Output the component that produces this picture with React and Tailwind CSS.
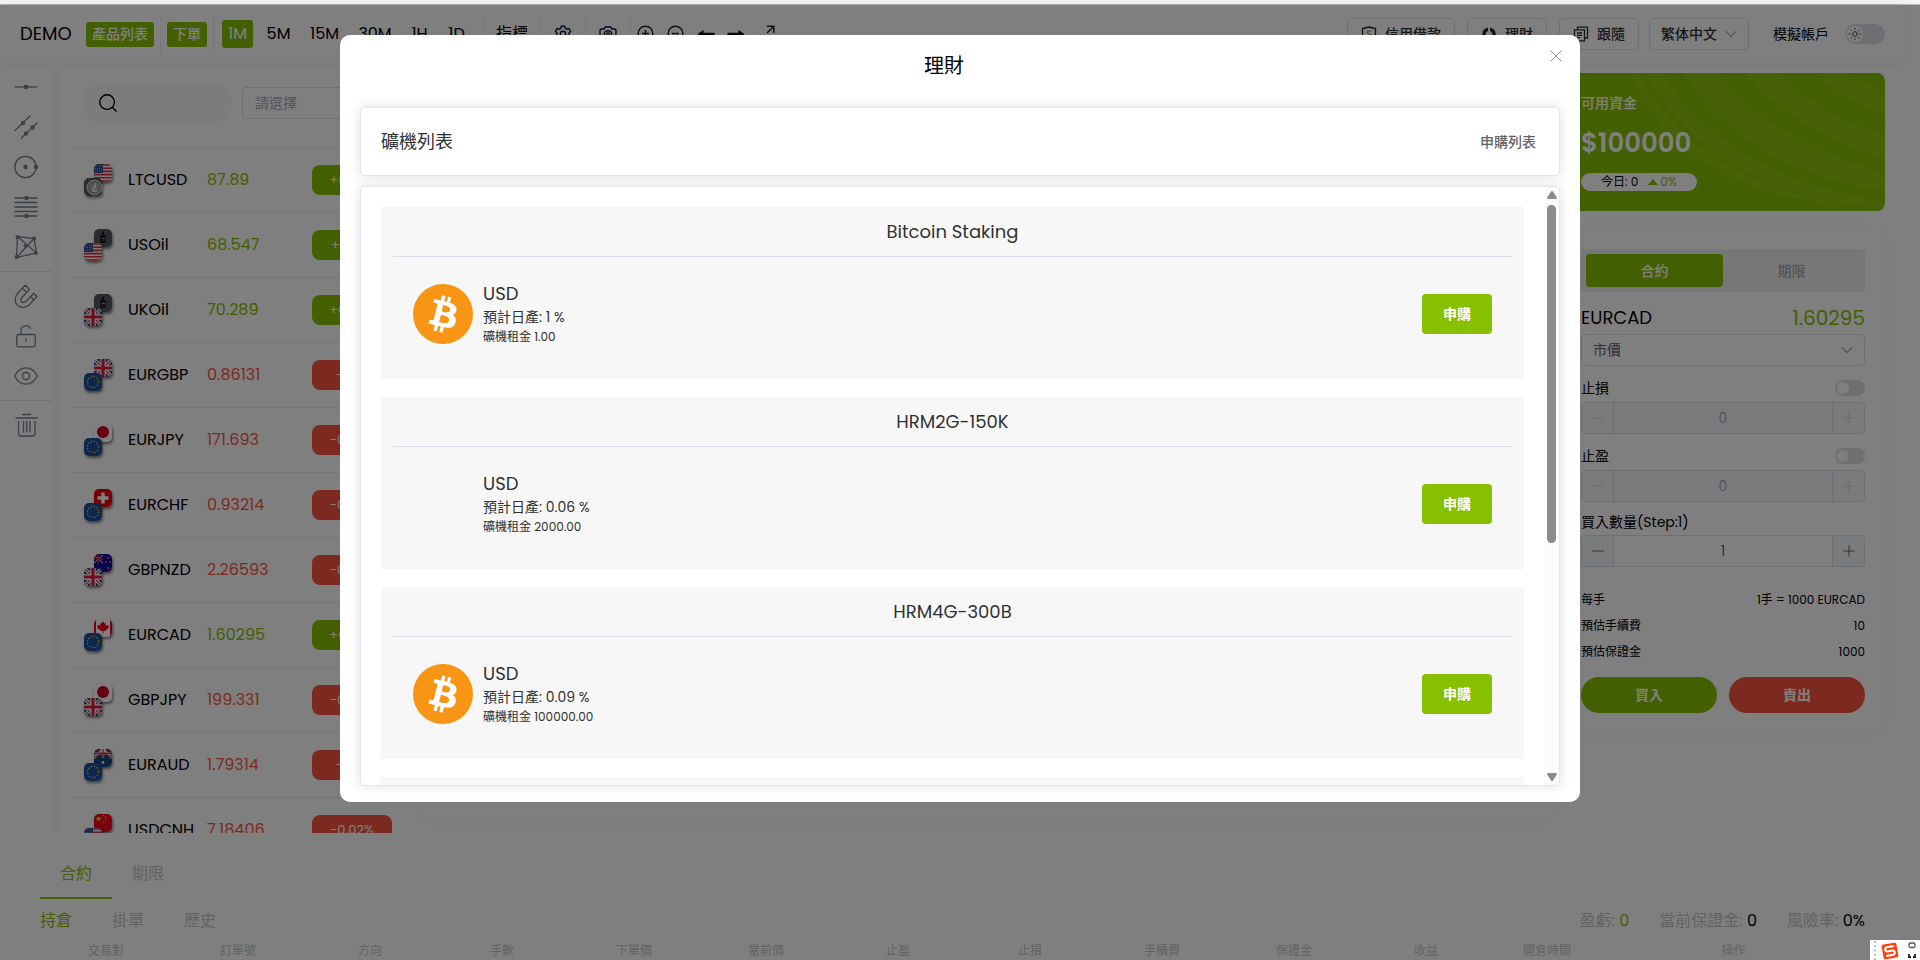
import React from "react";
import { Search, ChevronDown, X, Plus, Minus, Sun } from "lucide-react";

const FONT =
  "font-[Poppins,Inter,'Noto_Sans_CJK_TC',sans-serif]";

/* ---------- flags ---------- */

function UnionJack() {
  return (
    <>
      <rect width="18" height="18" fill="#22408c" />
      <path d="M0 0L18 18M18 0L0 18" stroke="#fff" strokeWidth="3.6" />
      <path d="M0 0L18 18M18 0L0 18" stroke="#d8203a" strokeWidth="1.2" />
      <path d="M9 0V18M0 9H18" stroke="#fff" strokeWidth="5.4" />
      <path d="M9 0V18M0 9H18" stroke="#d8203a" strokeWidth="3.2" />
    </>
  );
}

const FLAG_ART = {
  us: (
    <>
      <rect width="18" height="18" fill="#f4f4f4" />
      <path
        d="M0 1H18M0 4.2H18M0 7.4H18M0 10.6H18M0 13.8H18M0 17H18"
        stroke="#d22f45"
        strokeWidth="1.6"
      />
      <rect width="9" height="9" fill="#35508f" />
      <path d="M1 2H8M1 4.5H8M1 7H8" stroke="#9fb0d8" strokeWidth="0.8" strokeDasharray="1 1" />
    </>
  ),
  ltc: (
    <>
      <rect width="18" height="18" fill="#4c4c4c" />
      <path d="M2 0V18M5 0V6" stroke="#777" strokeWidth="1" />
      <circle cx="10.5" cy="9.5" r="7.5" fill="#a9a9a9" stroke="#dadada" />
      <circle cx="10.5" cy="9.5" r="5.4" fill="none" stroke="#7c7c7c" strokeWidth="0.6" />
      <path d="M11.6 5L9.2 13H13.4M8 10.4L12.4 8.4" stroke="#eee" strokeWidth="1.4" fill="none" />
    </>
  ),
  oil: (
    <>
      <rect width="18" height="18" fill="#55595f" />
      <path d="M6 7L9 4L12 7V14H6Z" fill="#222" />
      <path d="M9 2.5V8" stroke="#151515" strokeWidth="2" />
      <path d="M8 9.5H11" stroke="#bbb" strokeWidth="0.8" />
    </>
  ),
  gb: <UnionJack />,
  eu: (
    <>
      <rect width="18" height="18" fill="#1b4f9e" />
      <circle
        cx="9"
        cy="9"
        r="5.6"
        fill="none"
        stroke="#f1d53a"
        strokeWidth="1.3"
        strokeDasharray="1.2 1.73"
      />
    </>
  ),
  jp: (
    <>
      <rect width="18" height="18" fill="#fff" />
      <circle cx="9" cy="8" r="6" fill="#cc0029" />
    </>
  ),
  ch: (
    <>
      <rect width="18" height="18" fill="#ee0010" />
      <path d="M9 3.5V14.5M3.5 9H14.5" stroke="#fff" strokeWidth="3.4" />
    </>
  ),
  nz: (
    <>
      <rect width="18" height="18" fill="#0a0a9a" />
      <path d="M0 1L9 9M9 1L0 9" stroke="#eee" strokeWidth="1" />
      <path d="M4.5 0V10M0 5H9" stroke="#e2243b" strokeWidth="1.6" />
      <circle cx="14.5" cy="4" r="1" fill="#e8506a" />
      <circle cx="12" cy="8" r="1" fill="#e8506a" />
      <circle cx="16" cy="8" r="1" fill="#e8506a" />
      <circle cx="14.5" cy="14" r="1.1" fill="#e8506a" />
    </>
  ),
  ca: (
    <>
      <rect width="18" height="18" fill="#fff" />
      <path d="M0 0H2V18H0ZM16 0H18V18H16Z" fill="#f00018" />
      <path
        d="M9 2L10.4 4.6L12 4L11.6 7L13.4 5.8L15 7.6L14 9.4L10.8 12H9.5V14.2H8.5V12H7.2L4 9.4L3 7.6L4.6 5.8L6.4 7L6 4L7.6 4.6Z"
        fill="#f00018"
      />
    </>
  ),
  au: (
    <>
      <rect width="18" height="18" fill="#10467e" />
      <path d="M0 9L9 0L18 9" stroke="#fff" strokeWidth="2.6" fill="none" />
      <path d="M0 0L9 5L18 0M0 9L9 3L18 9" stroke="#e02a3c" strokeWidth="1.2" fill="none" />
      <path d="M9 0V9M0 4.5H18" stroke="#fff" strokeWidth="2.2" />
      <path d="M9 0V9M0 4.5H18" stroke="#e02a3c" strokeWidth="1.3" />
      <circle cx="9" cy="13.5" r="1.4" fill="#dfe8f4" />
    </>
  ),
  cn: (
    <>
      <rect width="18" height="18" fill="#f0051a" />
      <path
        d="M4.6 2L5.4 4H7.6L5.9 5.3L6.6 7.4L4.6 6.1L2.6 7.4L3.3 5.3L1.6 4H3.8Z"
        fill="#ffe100"
      />
      <path d="M9 1.4H10M11 3.4H12M11 6H12M9 8H10" stroke="#ffe100" />
    </>
  ),
};

function Flag({ code, className }) {
  return (
    <svg
      viewBox="0 0 18 18"
      aria-hidden="true"
      className={`absolute size-[18px] rounded-[5px] shadow-[1px_2px_3px_rgba(0,0,0,0.5)] ${className}`}
    >
      {FLAG_ART[code]}
    </svg>
  );
}

/* ---------- header icons ---------- */

const GearIcon = () => (
  <svg viewBox="0 0 18 18" className="size-[18px]" fill="none" stroke="#101a3c" strokeWidth="1.4">
    <path d="M7.3 1.2h3.4l.6 2.1 1.5.9 2.2-.6 1.6 2.9-1.6 1.6v1.8l1.6 1.6-1.6 2.9-2.2-.6-1.5.9-.6 2.1H7.3l-.6-2.1-1.5-.9-2.2.6-1.6-2.9L3 9.9V8.1L1.4 6.5 3 3.6l2.2.6 1.5-.9z" />
    <circle cx="9" cy="9" r="2.7" />
  </svg>
);

const CameraIcon = () => (
  <svg viewBox="0 0 18 18" className="size-[18px]" fill="none" stroke="#101a3c" strokeWidth="1.4">
    <path d="M1 5.5a1.5 1.5 0 0 1 1.5-1.5H5l1.2-2h5.6L13 4h2.500A1.500 1.500 0 0 1 17 5.500V14a1.500 1.500 0 0 1-1.500 1.500h-13A1.500 1.500 0 0 1 1 14z" />
    <circle cx="9" cy="9.5" r="3.8" />
    <circle cx="9" cy="9.5" r="1.5" />
  </svg>
);

const ZoomIcon = ({ plus }) => (
  <svg viewBox="0 0 18 18" className="size-[18px]" fill="none" stroke="#222" strokeWidth="1.5">
    <circle cx="8.5" cy="8.5" r="7.3" />
    <path d={plus ? "M5 8.5h7M8.5 5v7M13.5 13.5L17 17" : "M5 8.5h7M13.5 13.5L17 17"} />
  </svg>
);

const ArrowIcon = ({ right }) => (
  <svg viewBox="0 0 18 18" className={right ? "size-[18px] rotate-180" : "size-[18px]"}>
    <path d="M0.5 9L6.5 5V7.7H17.5V10.3H6.5V13Z" fill="#111" />
  </svg>
);

const ExpandIcon = () => (
  <svg viewBox="0 0 18 18" className="size-[18px]" fill="none" stroke="#222" strokeWidth="1.5">
    <path d="M10 8L16.5 1.5M10 1.2H16.8V8M8 10L1.5 16.5M1.2 10V16.8H8" />
  </svg>
);

const CoinIcon = () => (
  <svg viewBox="0 0 16 16" className="size-4">
    <path d="M7 1.5A7 7 0 0 0 1.2 9L5 9.8A3.5 3.5 0 0 1 7 5Z" fill="#1c2230" />
    <path d="M9 1.5A7 7 0 0 1 14.8 9L11 9.8A3.5 3.5 0 0 0 9 5Z" fill="#1c2230" />
    <path d="M2 11L5.3 11.3A3.6 3.6 0 0 0 10.7 11.3L14 11A7 7 0 0 1 2 11Z" fill="#1c2230" />
  </svg>
);

const LoanIcon = () => (
  <svg viewBox="0 0 16 16" className="size-4" fill="none" strokeWidth="1.3">
    <path d="M8 1L14.5 2.5V8C14.5 12 11.5 14 8 15.3C4.5 14 1.5 12 1.5 8V2.5Z" stroke="#222" />
    <path d="M10 5.8C9.6 4.8 6.3 4.7 6.3 6.5C6.3 8.2 10 7.5 10 9.4C10 11.2 6.4 11 6 9.9" stroke="#87c000" />
  </svg>
);

const FollowIcon = () => (
  <svg viewBox="0 0 16 16" className="size-4" fill="none" stroke="#303133" strokeWidth="1.3">
    <path d="M4.5 3.5V1.2H14.5V12H12M1.5 3.8H11.5V14.8H1.5ZM4 7H9M4 9.3H9M4 11.6H7" />
  </svg>
);

/* ---------- drawing tool icons ---------- */

function Tool({ label, children }) {
  return (
    <button type="button" aria-label={label} className="flex h-10 w-full items-center justify-center">
      <svg viewBox="0 0 24 24" className="size-6" fill="none" stroke="#76808f" strokeWidth="1.3">
        {children}
      </svg>
    </button>
  );
}

function Sidebar() {
  const dot = { fill: "#76808f", stroke: "none" };
  return (
    <aside className="w-[52px] shrink-0 pt-1">
      <Tool label="水平線">
        <path d="M0.5 12H23.5" />
        <circle cx="12" cy="12" r="2.3" {...dot} />
      </Tool>
      <Tool label="平行線">
        <path d="M0.5 16L16.5 0.5M7 23.5L23.5 7.5" />
        <circle cx="9" cy="8" r="2.2" {...dot} />
        <circle cx="18.5" cy="12.5" r="2.2" {...dot} />
        <circle cx="12" cy="18.5" r="2.2" {...dot} />
      </Tool>
      <Tool label="圓">
        <circle cx="11.5" cy="12" r="10.6" />
        <circle cx="11.5" cy="12" r="2.2" {...dot} />
        <circle cx="22" cy="12" r="2.2" {...dot} />
      </Tool>
      <Tool label="斐波那契">
        <path d="M0.5 3H23.5M0.5 7.5H23.5M0.5 12H23.5M0.5 16.5H23.5M0.5 21H23.5" />
        <circle cx="12.5" cy="3" r="2.2" {...dot} />
        <circle cx="12.5" cy="21" r="2.2" {...dot} />
      </Tool>
      <Tool label="XABCD">
        <path d="M3.5 1.5L20 3.5L22.5 18L2.5 22.5ZM3.5 1.5L22.5 18M20 3.5L2.5 22.5" />
        <circle cx="3.5" cy="2" r="2" {...dot} />
        <circle cx="20" cy="3.5" r="2" {...dot} />
        <circle cx="22" cy="18" r="2" {...dot} />
        <circle cx="2.5" cy="22" r="2" {...dot} />
        <circle cx="11.5" cy="11" r="2" {...dot} />
      </Tool>
      <hr className="my-1 border-[#e3e6ea]" />
      <Tool label="磁鐵">
        <path d="M11.5 1L3.5 9.5C-0.5 14.5 1 20 4.5 22C8.5 24.5 13 23 16 20L23 12.5L19.5 9.5L12.5 17C11 18.5 9 19 7.8 17.8C6.600 16.600 7 14.500 8.300 13L15.500 5.500L11.500 1M8.500 4.200L12.500 8.500M16.500 12.500L20 16" />
      </Tool>
      <Tool label="鎖定">
        <rect x="2.800" y="10.500" width="18.400" height="12.300" rx="1.500" />
        <path d="M7 10.500V6.500C7 0.500 16 0.500 16.500 5M12 14.500V18" />
      </Tool>
      <Tool label="顯示">
        <path d="M0.700 12C6 1.200 18 1.200 23.300 12C18 22.800 6 22.800 0.700 12Z" />
        <circle cx="12" cy="12" r="3.500" />
      </Tool>
      <hr className="my-1 border-[#e3e6ea]" />
      <Tool label="刪除">
        <path d="M8 1.500H17M1.500 5H23.500M4.500 8V20.500C4.500 22.500 5.500 23 6.500 23H18C19.500 23 21 22.500 21 20.500V8M9.500 8V19.500M12.700 8V19.500M16 8V19.500" />
      </Tool>
    </aside>
  );
}

/* ---------- header ---------- */

const PERIODS = [
  ["1M", "w-[31px] bg-[#87c000] text-white"],
  ["5M", "w-[35px]"],
  ["15M", "w-[41px]"],
  ["30M", "w-[44px]"],
  ["1H", "w-[29px]"],
  ["1D", "w-[29px]"],
];

const Divider = () => <span className="h-[38px] w-px bg-[#eceef2]" />;

function Header() {
  const action =
    "flex h-8 items-center justify-center gap-2 rounded-[4px] border border-[#dcdfe6] text-sm font-medium text-[#303133]";
  return (
    <header className="mr-[15px] flex h-[58px] shrink-0 items-center justify-between pl-5 pr-5 shadow-[0_0_10px_rgba(0,0,0,0.08)]">
      <div className="flex items-center">
        <span className="w-[66px] text-lg">DEMO</span>
        <button type="button" className="mr-1.5 h-[25px] w-[68px] rounded-[3px] bg-[#87c000] text-sm font-medium text-white">
          產品列表
        </button>
        <Divider />
        <button type="button" className="mx-1.5 h-[25px] w-10 rounded-[3px] bg-[#87c000] text-sm font-medium text-white">
          下單
        </button>
        <Divider />
        <div className="ml-2 mr-3 flex gap-2">
          {PERIODS.map(([name, look]) => (
            <button key={name} type="button" className={`h-7 rounded-[3px] text-base ${look}`}>
              {name}
            </button>
          ))}
        </div>
        <Divider />
        <button type="button" className="mx-3 text-base">指標</button>
        <Divider />
        <button type="button" aria-label="設定" className="mx-3 flex w-5 justify-center"><GearIcon /></button>
        <Divider />
        <button type="button" aria-label="截圖" className="mx-3 flex w-5 justify-center"><CameraIcon /></button>
        <Divider />
        <div className="ml-1.5 flex gap-3">
          <button type="button" aria-label="放大"><ZoomIcon plus /></button>
          <button type="button" aria-label="縮小"><ZoomIcon /></button>
          <button type="button" aria-label="向左"><ArrowIcon /></button>
          <button type="button" aria-label="向右"><ArrowIcon right /></button>
          <button type="button" aria-label="全螢幕"><ExpandIcon /></button>
        </div>
      </div>
      <div className="flex items-center">
        <button type="button" className={`mr-3 w-[108px] ${action}`}><LoanIcon />信用借款</button>
        <button type="button" className={`mr-3 w-20 ${action}`}><CoinIcon />理財</button>
        <button type="button" className={`mr-2.5 w-20 ${action}`}><FollowIcon />跟隨</button>
        <label className="relative flex">
          <select aria-label="語言" className="h-8 w-[100px] appearance-none rounded-[4px] border border-[#dcdfe6] pl-[11px] text-sm font-medium text-[#303133]">
            <option>繁体中文</option>
          </select>
          <ChevronDown className="absolute right-2 top-1.5 size-5 text-[#a8abb2]" strokeWidth={1.3} />
        </label>
        <label htmlFor="demo" className="ml-6 mr-4 text-sm">模擬帳戶</label>
        <span className="relative flex">
          <input id="demo" type="checkbox" role="switch" className="h-5 w-10 appearance-none rounded-full bg-[#dcdfe6] before:absolute before:left-0.5 before:top-0.5 before:size-4 before:rounded-full before:bg-white" />
          <Sun className="absolute left-0.5 top-0.5 size-4 p-px text-[#444]" strokeWidth={1.7} />
        </span>
      </div>
    </header>
  );
}

/* ---------- product list ---------- */

const PRODUCTS = [
  ["LTCUSD", "87.89", "+0.32%", true, "us", "ltc"],
  ["USOil", "68.547", "+0.41%", true, "oil", "us"],
  ["UKOil", "70.289", "+0.38%", true, "oil", "gb"],
  ["EURGBP", "0.86131", "-0.1%", false, "gb", "eu"],
  ["EURJPY", "171.693", "-0.08%", false, "jp", "eu"],
  ["EURCHF", "0.93214", "-0.06%", false, "ch", "eu"],
  ["GBPNZD", "2.26593", "-0.05%", false, "nz", "gb"],
  ["EURCAD", "1.60295", "+0.02%", true, "ca", "eu"],
  ["GBPJPY", "199.331", "-0.09%", false, "jp", "gb"],
  ["EURAUD", "1.79314", "-0.1%", false, "au", "eu"],
  ["USDCNH", "7.18406", "-0.02%", false, "cn", "us"],
];

function ProductList() {
  return (
    <section className="w-[360px] shrink-0 overflow-hidden border-l-8 border-[#fafafa] px-3 pt-5">
      <div className="mb-6 flex items-center gap-2.5 pl-2.5">
        <label className="flex h-10 w-[150px] items-center rounded-full bg-[#f8f8f8] pl-[15px]">
          <Search className="size-[22px] shrink-0" strokeWidth={1.5} />
          <input aria-label="搜尋" className="w-24 bg-transparent px-2 text-sm outline-none" />
        </label>
        <select aria-label="分類" className="h-8 w-[140px] appearance-none rounded-[4px] border border-[#dcdfe6] pl-3 text-sm text-[#a8abb2]">
          <option>請選擇</option>
        </select>
      </div>
      <ul>
        {PRODUCTS.map(([name, price, change, up, back, front]) => (
          <li key={name} className="flex h-[65px] items-center border-t border-[#ebebeb] pl-3">
            <span className="relative mr-4 h-8 w-7 shrink-0">
              <Flag code={back} className="right-0 top-0" />
              <Flag code={front} className="bottom-0 left-0" />
            </span>
            <span className="w-[79px] text-base">{name}</span>
            <span className={`w-[105px] text-base ${up ? "text-[#87c000]" : "text-[#f95541]"}`}>{price}</span>
            <span className={`flex h-[30px] w-20 shrink-0 items-center justify-center rounded-lg text-[13px] text-white ${up ? "bg-[#87c000]" : "bg-[#f95541]"}`}>
              {change}
            </span>
          </li>
        ))}
      </ul>
    </section>
  );
}

/* ---------- order column ---------- */

function BalanceCard() {
  return (
    <section className="relative h-[138px] overflow-hidden rounded-lg bg-[#87c000] px-5 pt-5 text-white">
      <svg viewBox="0 0 324 138" preserveAspectRatio="none" className="absolute inset-0 size-full" fill="#fff" fillOpacity="0.06">
        <path d="M70 0C95 65 160 125 290 132C180 118 110 65 77 0Z" />
        <path d="M86 0C115 60 190 125 324 135V128C220 115 140 65 101 0Z" />
        <path d="M122 0C160 60 230 105 324 118V100C250 80 190 45 158 0Z" />
        <path d="M182 0C220 40 270 70 324 86V62C280 48 240 25 218 0Z" />
        <path d="M254 0C275 20 300 35 324 43V20C310 15 298 8 288 0Z" />
      </svg>
      <h3 className="relative text-sm font-medium leading-5">可用資金</h3>
      <p className="relative mt-2.5 text-[26px] font-semibold leading-10">$100000</p>
      <p className="relative mt-2.5 flex h-[18px] w-[116px] items-center justify-center gap-2.5 rounded-full bg-white text-xs text-black">
        <span>今日: 0</span>
        <span className="flex items-center gap-0.5 text-[#87c000]">
          <svg viewBox="0 0 10 6" className="h-1.5 w-2.5" fill="currentColor"><path d="M5 0L10 6H0Z" /></svg>
          0%
        </span>
      </p>
    </section>
  );
}

function Stepper({ id, value, off }) {
  const side = `flex w-8 items-center justify-center bg-[#f5f7fa] ${off ? "text-[#d4d7de]" : "text-[#606266]"}`;
  return (
    <div className={`flex h-8 overflow-hidden rounded-[4px] border border-[#dcdfe6] ${off ? "bg-[#f5f7fa]" : ""}`}>
      <button type="button" aria-label="減少" disabled={off} className={`${side} border-r border-[#dcdfe6]`}>
        <Minus className="size-[18px]" strokeWidth={1.3} />
      </button>
      <input
        id={id}
        defaultValue={value}
        disabled={off}
        className={`min-w-0 flex-1 bg-transparent text-center text-sm ${off ? "text-[#a8abb2]" : "text-[#606266]"}`}
      />
      <button type="button" aria-label="增加" disabled={off} className={`${side} border-l border-[#dcdfe6]`}>
        <Plus className="size-[18px]" strokeWidth={1.3} />
      </button>
    </div>
  );
}

function SwitchRow({ id, name }) {
  return (
    <div className="mt-2 flex h-7 items-center justify-between">
      <label htmlFor={id} className="text-sm">{name}</label>
      <input
        type="checkbox"
        role="switch"
        aria-label={`啟用${name}`}
        className="relative h-4 w-[30px] appearance-none rounded-full bg-[#dcdfe6] before:absolute before:left-0.5 before:top-0.5 before:size-3 before:rounded-full before:bg-white"
      />
    </div>
  );
}

function OrderColumn() {
  const facts = [
    ["每手", "1手 = 1000 EURCAD"],
    ["預估手續費", "10"],
    ["預估保證金", "1000"],
  ];
  return (
    <aside className="ml-2 mr-[35px] w-[324px] shrink-0 pt-2.5">
      <BalanceCard />
      <section className="mt-4 rounded-2xl px-5 pb-[21px] pt-[22px] shadow-[0_0_10px_rgba(0,0,0,0.05)]">
        <div className="grid h-[43px] grid-cols-2 rounded-[4px] bg-[#efefef] p-[5px] text-sm">
          <button type="button" className="rounded-[4px] bg-[#87c000] font-medium text-white">合約</button>
          <button type="button" className="font-medium text-[#a6a6a6]">期限</button>
        </div>
        <div className="flex h-[42px] items-center justify-between pt-2.5">
          <span className="text-lg">EURCAD</span>
          <span className="text-xl text-[#87c000]">1.60295</span>
        </div>
        <div className="relative flex">
          <select aria-label="訂單類型" className="h-8 w-full appearance-none rounded-[4px] border border-[#dcdfe6] pl-[11px] text-sm text-[#606266]">
            <option>市價</option>
          </select>
          <ChevronDown className="absolute right-2 top-1.5 size-5 text-[#a8abb2]" strokeWidth={1.3} />
        </div>
        <SwitchRow id="stop" name="止損" />
        <Stepper id="stop" value="0" off />
        <SwitchRow id="profit" name="止盈" />
        <Stepper id="profit" value="0" off />
        <label htmlFor="amount" className="mt-1.5 flex h-[27px] items-center text-sm">買入數量(Step:1)</label>
        <Stepper id="amount" value="1" />
        <dl className="mt-5 text-xs">
          {facts.map(([name, value]) => (
            <div key={name} className="flex h-[26px] items-center justify-between">
              <dt>{name}</dt>
              <dd>{value}</dd>
            </div>
          ))}
        </dl>
        <div className="mt-3 grid h-9 grid-cols-2 gap-3 text-sm font-bold text-white">
          <button type="button" className="rounded-full bg-[#87c000]">買入</button>
          <button type="button" className="rounded-full bg-[#f95541]">賣出</button>
        </div>
      </section>
    </aside>
  );
}

/* ---------- positions ---------- */

const COLUMNS = ["交易對", "訂單號", "方向", "手數", "下單價", "當前價", "止盈", "止損", "手續費", "保證金", "收益"];

function Positions() {
  return (
    <section className="h-[127px] shrink-0 overflow-hidden pl-10 pr-[55px] pt-[18px] text-base text-[#c6c6c6]">
      <div className="flex h-12">
        <button type="button" className="w-[72px] border-b-2 border-[#87c000] text-[#87c000]">合約</button>
        <button type="button" className="w-[72px] border-b-2 border-transparent">期限</button>
      </div>
      <div className="flex h-11 items-center justify-between">
        <div className="flex">
          <button type="button" className="w-[72px] text-left text-[#87c000]">持倉</button>
          <button type="button" className="w-[72px] text-left">掛單</button>
          <button type="button" className="w-[72px] text-left">歷史</button>
        </div>
        <div className="flex gap-[30px]">
          <span>盈虧: <b className="font-normal text-[#87c000]">0</b></span>
          <span>當前保證金: <b className="font-normal text-black">0</b></span>
          <span>風險率: <b className="font-normal text-black">0%</b></span>
        </div>
      </div>
      <table className="w-full table-fixed text-xs">
        <thead>
          <tr>
            {COLUMNS.map((name) => (
              <th key={name} className="w-[132px] font-normal leading-4">{name}</th>
            ))}
            <th className="w-[110px] font-normal">開倉時間</th>
            <th className="font-normal">操作</th>
          </tr>
        </thead>
      </table>
    </section>
  );
}

/* ---------- dialog ---------- */

const MINERS = [
  ["Bitcoin Staking", "1 %", "1.00", true],
  ["HRM2G-150K", "0.06 %", "2000.00", false],
  ["HRM4G-300B", "0.09 %", "100000.00", true],
  ["HRM8G-600B", "0.12 %", "200000.00", true],
];

const Bitcoin = () => (
  <svg viewBox="0 0 32 32" className="size-full" aria-hidden="true">
    <circle cx="16" cy="16" r="16" fill="#f99515" />
    <path
      fill="#fff"
      d="M23.189 14.020c.314-2.096-1.283-3.223-3.465-3.975l.708-2.840-1.728-.430-.690 2.765c-.454-.114-.920-.220-1.385-.326l.695-2.783L15.596 6l-.708 2.839c-.376-.086-.746-.170-1.104-.260l.002-.009-2.384-.595-.460 1.846s1.283.294 1.256.312c.700.175.826.638.805 1.006l-.806 3.235c.048.012.110.030.180.057l-.183-.045-1.130 4.532c-.086.212-.303.531-.793.410.018.025-1.256-.313-1.256-.313l-.858 1.978 2.250.561c.418.105.828.215 1.231.318l-.715 2.872 1.727.430.708-2.840c.472.127.930.245 1.378.357l-.706 2.828 1.728.430.715-2.866c2.948.558 5.164.333 6.097-2.333.752-2.146-.037-3.385-1.588-4.192 1.130-.260 1.980-1.003 2.207-2.538zm-3.950 5.538c-.533 2.147-4.148.986-5.320.695l.950-3.805c1.172.293 4.929.872 4.370 3.110zm.535-5.569c-.487 1.953-3.495.960-4.470.717l.860-3.450c.975.243 4.118.696 3.610 2.733z"
    />
  </svg>
);

function Dialog() {
  const card = "rounded-[4px] border border-[#e4e7ed] bg-white shadow-[0_0_12px_rgba(0,0,0,0.12)]";
  return (
    <div role="dialog" aria-labelledby="title" className="relative w-full max-w-[1240px] rounded-[10px] bg-white px-5 pb-4 pt-[15px] text-[#303133]">
      <h2 id="title" className="mb-[25px] mr-8 text-center text-xl leading-8 text-black">理財</h2>
      <button type="button" aria-label="關閉" className="absolute right-3.5 top-[11px] text-[#909399]">
        <X className="size-5" strokeWidth={1.2} />
      </button>
      <div className={`flex h-[69px] items-center justify-between pl-5 pr-[23px] ${card}`}>
        <h3 className="text-lg">礦機列表</h3>
        <a href="#orders" className="text-sm font-medium text-[#606266]">申購列表</a>
      </div>
      <div className={`mt-2.5 flex max-h-[600px] overflow-hidden ${card}`}>
        <ul className="flex flex-1 flex-col gap-[18px] p-5">
          {MINERS.map(([name, yieldRate, rent, icon]) => (
            <li key={name} className="h-[172px] shrink-0 bg-[#f7f7f7] px-3">
              <h4 className="border-b border-[#dcdfe6] text-center text-lg leading-[49px]">{name}</h4>
              <div className="mt-[25px] flex items-center px-5">
                <span className="mr-2.5 size-[60px]">{icon && <Bitcoin />}</span>
                <div className="flex-1">
                  <p className="text-lg leading-6">USD</p>
                  <p className="text-sm leading-[22px]">預計日產: {yieldRate}</p>
                  <p className="text-xs leading-[18px]">礦機租金 {rent}</p>
                </div>
                <button type="button" className="h-10 w-[70px] rounded-[4px] bg-[#87c000] text-sm font-bold text-white">
                  申購
                </button>
              </div>
            </li>
          ))}
        </ul>
        <div className="flex w-[15px] flex-col items-center bg-[#fcfcfc] py-1">
          <svg viewBox="0 0 10 8" className="h-2 w-2.5" fill="#8b8b8b"><path d="M4 0.5Q5 -0.5 6 0.5L9.8 6.5Q10 8 9 8H1Q0 8 0.2 6.5Z" /></svg>
          <span className="mt-1.5 h-[338px] w-[9px] rounded-full bg-[#8b8b8b]" />
          <svg viewBox="0 0 10 8" className="mt-auto h-2 w-2.5" fill="#8b8b8b"><path d="M4 7.5Q5 8.5 6 7.5L9.8 1.5Q10 0 9 0H1Q0 0 0.2 1.5Z" /></svg>
        </div>
      </div>
    </div>
  );
}

export default function App() {
  return (
    <div className={`relative flex h-screen flex-col overflow-hidden bg-white text-black ${FONT}`}>
      <div className="h-[5px] shrink-0 border-b border-[#b8b8b8] bg-[#f5f5f5]" />
      <div className="relative flex min-h-0 flex-1 flex-col">
        <Header />
        <main className="flex min-h-0 flex-1 overflow-hidden">
          <Sidebar />
          <ProductList />
          <section aria-label="圖表" className="mb-2.5 ml-2 mt-2.5 flex-1 rounded-2xl shadow-[0_0_10px_rgba(0,0,0,0.05)]" />
          <OrderColumn />
        </main>
        <Positions />
        <div className="absolute inset-0 flex items-start justify-center bg-black/50 pt-[30px]">
          <Dialog />
        </div>
      </div>
      <div className="absolute bottom-0 right-0 flex h-5 w-[50px] items-center overflow-hidden bg-white pl-1">
        <svg viewBox="0 0 46 20" className="h-5 w-[46px] shrink-0">
          <path d="M1 1V20" stroke="#aaa" strokeWidth="1.5" strokeDasharray="2 2.3" />
          <g transform="rotate(-10 16 11)">
            <rect x="8.5" y="3.5" width="15" height="15" rx="2" fill="#f9440f" />
            <path d="M20.5 6.8H13.5Q11.5 6.8 11.5 8.9Q11.5 11 13.5 11H18.5Q20.5 11 20.5 13Q20.5 15.2 18.5 15.2H11.3" fill="none" stroke="#fff" strokeWidth="2" />
          </g>
          <rect x="35" y="3" width="6" height="4.5" rx="1.5" fill="none" stroke="#555" strokeWidth="1.3" />
          <path d="M35 14V17H37M39 17H41V14" fill="none" stroke="#222" strokeWidth="1.8" />
        </svg>
      </div>
    </div>
  );
}
